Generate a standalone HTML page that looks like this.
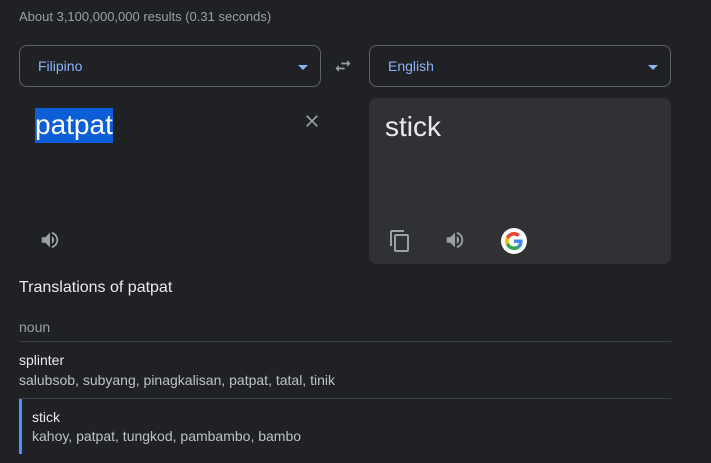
<html><head><style>
body{margin:0;background:#202124;width:711px;height:463px;overflow:hidden;font-family:"Liberation Sans",Arial,sans-serif;position:relative}
.a{position:absolute;white-space:nowrap}
.dd{position:absolute;top:45px;width:300px;height:40px;border:1px solid #5f6368;border-radius:8px;box-sizing:content-box}
.dd span{position:absolute;left:18px;top:12px;font-size:14px;color:#8ab4f8}
.dd i{position:absolute;right:12px;top:19px;border-left:5px solid transparent;border-right:5px solid transparent;border-top:5px solid #8ab4f8}
</style></head><body>
<div class="a" style="left:19px;top:9px;font-size:13px;color:#9aa0a6">About 3,100,000,000 results (0.31 seconds)</div>
<div class="dd" style="left:19px"><span>Filipino</span><i></i></div>
<div class="dd" style="left:369px"><span>English</span><i></i></div>
<svg class="a" style="left:333px;top:56px" width="20" height="20" viewBox="0 0 24 24"><path fill="#9aa0a6" d="M6.99 11L3 15l3.99 4v-3H14v-2H6.99v-3zM21 9l-3.99-4v3H10v2h7.01v3L21 9z"/></svg>
<div class="a" style="left:35px;top:108px;height:35px;width:78px;background:#0b5ed7"></div>
<div class="a" style="left:35px;top:109px;font-size:28px;color:#fff">patpat</div>
<svg class="a" style="left:302px;top:111px" width="20" height="20" viewBox="0 0 24 24"><path fill="#9aa0a6" d="M19 6.41L17.59 5 12 10.59 6.41 5 5 6.41 10.59 12 5 17.59 6.41 19 12 13.41 17.59 19 19 17.59 13.41 12z"/></svg>
<svg class="a" style="left:39px;top:229px" width="22" height="22" viewBox="0 0 24 24"><path fill="#9aa0a6" d="M3 9v6h4l5 5V4L7 9H3zm13.5 3c0-1.77-1.02-3.29-2.5-4.03v8.05c1.48-.73 2.5-2.25 2.5-4.02zM14 3.23v2.06c2.89.86 5 3.54 5 6.71s-2.11 5.85-5 6.71v2.06c4.01-.91 7-4.49 7-8.77s-2.99-7.86-7-8.77z"/></svg>
<div class="a" style="left:369px;top:98px;width:302px;height:166px;background:#303134;border-radius:8px"></div>
<div class="a" style="left:385px;top:111px;font-size:28px;color:#e8eaed">stick</div>
<svg class="a" style="left:388px;top:229px" width="24" height="24" viewBox="0 0 24 24"><path fill="#9aa0a6" d="M16 1H4c-1.1 0-2 .9-2 2v14h2V3h12V1zm3 4H8c-1.1 0-2 .9-2 2v14c0 1.1.9 2 2 2h11c1.1 0 2-.9 2-2V7c0-1.1-.9-2-2-2zm0 16H8V7h11v14z"/></svg>
<svg class="a" style="left:444px;top:229px" width="22" height="22" viewBox="0 0 24 24"><path fill="#9aa0a6" d="M3 9v6h4l5 5V4L7 9H3zm13.5 3c0-1.77-1.02-3.29-2.5-4.03v8.05c1.48-.73 2.5-2.25 2.5-4.02zM14 3.23v2.06c2.89.86 5 3.54 5 6.71s-2.11 5.85-5 6.71v2.06c4.01-.91 7-4.49 7-8.77s-2.99-7.86-7-8.77z"/></svg>
<div class="a" style="left:501px;top:228px;width:26px;height:26px;border-radius:50%;background:#fff"></div>
<svg class="a" style="left:505px;top:232px" width="18" height="18" viewBox="0 0 48 48"><path fill="#EA4335" d="M24 9.5c3.54 0 6.71 1.22 9.21 3.6l6.850-6.85C35.9 2.38 30.47 0 24 0 14.62 0 6.51 5.38 2.56 13.22l7.98 6.19C12.43 13.72 17.74 9.5 24 9.5z"/><path fill="#4285F4" d="M46.98 24.55c0-1.57-.15-3.09-.38-4.55H24v9.02h12.94c-.58 2.96-2.26 5.48-4.78 7.18l7.73 6c4.51-4.18 7.09-10.36 7.09-17.65z"/><path fill="#FBBC05" d="M10.53 28.59c-.48-1.45-.76-2.99-.76-4.590s.27-3.14.76-4.59l-7.98-6.19C.92 16.46 0 20.12 0 24c0 3.88.92 7.54 2.56 10.78l7.97-6.19z"/><path fill="#34A853" d="M24 48c6.48 0 11.93-2.13 15.89-5.81l-7.73-6c-2.15 1.45-4.92 2.3-8.16 2.3-6.26 0-11.57-4.22-13.47-9.91l-7.98 6.19C6.51 42.62 14.62 48 24 48z"/></svg>
<div class="a" style="left:19px;top:279px;font-size:16px;color:#e8eaed">Translations of patpat</div>
<div class="a" style="left:19px;top:319px;font-size:14px;color:#9aa0a6">noun</div>
<div class="a" style="left:19px;top:341px;width:652px;height:1px;background:#3c4043"></div>
<div class="a" style="left:19px;top:352px;font-size:14px;color:#e8eaed">splinter</div>
<div class="a" style="left:19px;top:372px;font-size:14px;color:#bdc1c6">salubsob, subyang, pinagkalisan, patpat, tatal, tinik</div>
<div class="a" style="left:19px;top:398px;width:652px;height:1px;background:#3c4043"></div>
<div class="a" style="left:19px;top:399px;width:3px;height:55px;background:#4d90fe"></div>
<div class="a" style="left:32px;top:409px;font-size:14px;color:#e8eaed">stick</div>
<div class="a" style="left:32px;top:428px;font-size:14px;color:#bdc1c6">kahoy, patpat, tungkod, pambambo, bambo</div>
</body></html>
